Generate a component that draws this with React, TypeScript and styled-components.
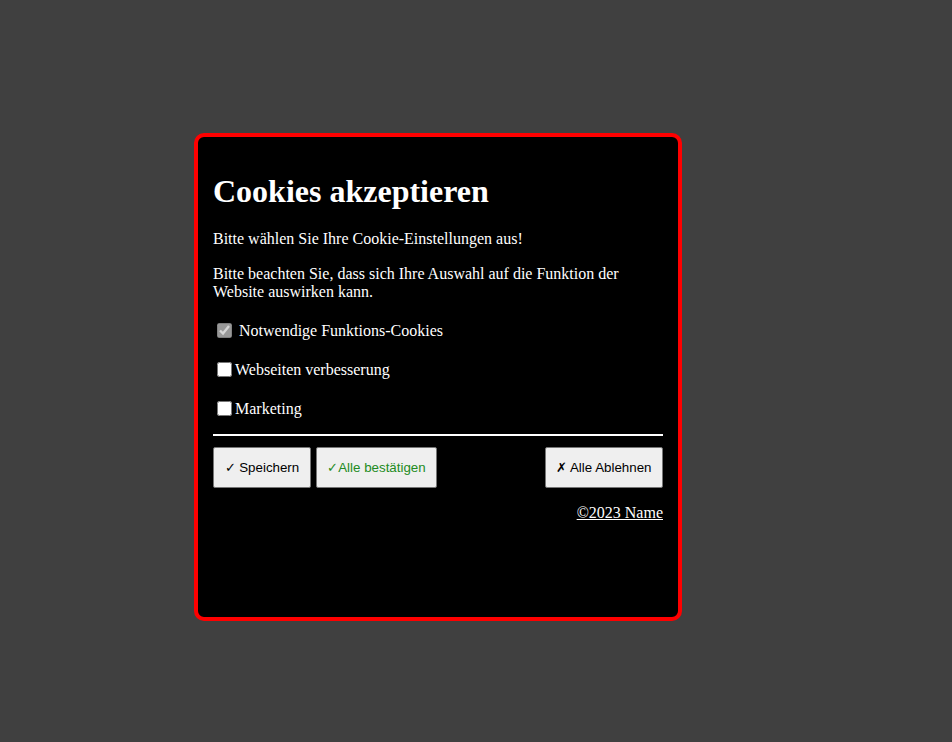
import React from "react";
import styled, { createGlobalStyle } from "styled-components";

const Global = createGlobalStyle`
  html, body { margin: 0; padding: 0; }
  body {
    background: #404040;
    font-family: "Liberation Serif", "Times New Roman", serif;
    min-height: 742px;
  }
`;

const Page = styled.div`
  padding: 133px 0 0 194px;
`;

const Dialog = styled.div`
  box-sizing: border-box;
  width: 488px;
  height: 488px;
  background: #000;
  border: 4px solid #ff0000;
  border-radius: 10px;
  padding: 15px;
  color: #fff;
`;

const Title = styled.h1`
  font-size: 32px;
  font-weight: bold;
  margin: 21px 0 20px;
`;

const Text = styled.p`
  font-size: 16px;
  margin: 0 0 17px;
`;

const Options = styled.div`
  padding-top: 2px;
`;

const Option = styled.label`
  display: flex;
  align-items: center;
  font-size: 16px;
  height: 21px;
  margin-bottom: 18px;

  &:last-child {
    margin-bottom: 15px;
  }
`;

const Check = styled.input`
  margin: 3px 3px 3px 4px;
  width: 15px;
  height: 15px;
`;

const Gap = styled.span`
  display: inline-block;
  width: 4px;
`;

const Rule = styled.hr`
  border: none;
  height: 2px;
  background: #fff;
  margin: 0 0 11px;
`;

const Actions = styled.div`
  display: flex;
  gap: 5px;
`;

const Button = styled.button<{ $green?: boolean; $push?: boolean }>`
  font-family: Arial, "Liberation Sans", sans-serif;
  font-size: 13.33px;
  height: 41px;
  padding: 0 10.5px;
  background: #efefef;
  border: 1px solid #767676;
  border-radius: 2px;
  color: ${(p) => (p.$green ? "#228b22" : "#000")};
  margin-left: ${(p) => (p.$push ? "auto" : "0")};
`;

const Footer = styled.div`
  text-align: right;
  margin-top: 16px;
  font-size: 16px;
`;

const Link = styled.a`
  color: #fff;
  text-decoration: underline;
`;

export default function App() {
  return (
    <>
      <Global />
      <Page>
        <Dialog>
          <Title>Cookies akzeptieren</Title>
          <Text>Bitte wählen Sie Ihre Cookie-Einstellungen aus!</Text>
          <Text>
            Bitte beachten Sie, dass sich Ihre Auswahl auf die Funktion der
            Website auswirken kann.
          </Text>
          <Options>
            <Option>
              <Check type="checkbox" checked disabled readOnly />
              <Gap />
              Notwendige Funktions-Cookies
            </Option>
            <Option>
              <Check type="checkbox" />
              Webseiten verbesserung
            </Option>
            <Option>
              <Check type="checkbox" />
              Marketing
            </Option>
          </Options>
          <Rule />
          <Actions>
            <Button>✓ Speichern</Button>
            <Button $green>✓Alle bestätigen</Button>
            <Button $push>✗ Alle Ablehnen</Button>
          </Actions>
          <Footer>
            <Link href="#">©2023 Name</Link>
          </Footer>
        </Dialog>
      </Page>
    </>
  );
}
